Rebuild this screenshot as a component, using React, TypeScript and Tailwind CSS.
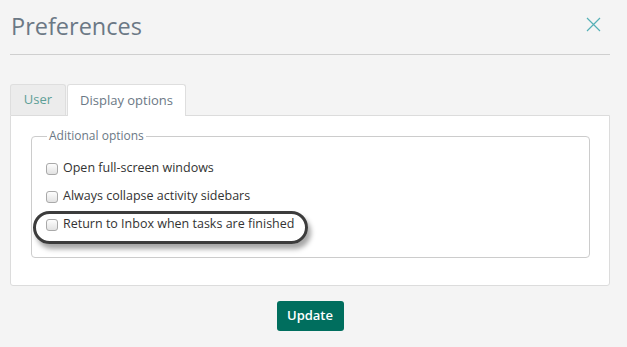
import React from "react";

const rows = [
  "Open full-screen windows",
  "Always collapse activity sidebars",
  "Return to Inbox when tasks are finished",
];

function Box() {
  return (
    <span className="inline-block w-[12px] h-[12px] rounded-[3px] border border-[#a9a9a9] bg-gradient-to-b from-[#fdfdfd] to-[#e2e2e2] shrink-0" />
  );
}

export default function App() {
  return (
    <div className="w-[627px] h-[347px] bg-[#f4f4f4] font-['Open_Sans',sans-serif] pl-[10px] pr-[17px] overflow-hidden">
      <div className="flex items-start justify-between h-[55px] border-b border-[#cfcfcf]">
        <h1 className="text-[23.5px] leading-none text-[#6b7885] mt-[15px] ml-[1px]">Preferences</h1>
        <svg className="mt-[17px] mr-[9px]" width="15" height="15" viewBox="0 0 15 15">
          <path d="M1 1 L14 14 M14 1 L1 14" stroke="#55b0b6" strokeWidth="1.2" fill="none" />
        </svg>
      </div>

      <div className="mt-[29px] flex h-[31px] items-end">
        <div className="w-[56px] h-[31px] bg-[#ececec] border border-[#dedede] border-b-0 rounded-t-[3px] flex items-center justify-center text-[13px] text-[#5d9f97]">
          User
        </div>
        <div className="ml-[1px] w-[119px] h-[32px] -mb-px relative z-10 bg-white border border-[#dedede] border-b-0 rounded-t-[3px] flex items-center justify-center text-[13px] text-[#6b7885]">
          Display options
        </div>
      </div>

      <div className="w-[600px] h-[171px] bg-white border border-[#dcdcdc] rounded-b-[3px] pt-[11px] pl-[20px]">
        <fieldset className="relative w-[559px] h-[131px] border border-[#cccccc] rounded-[4px] px-[14px] pt-[10px]">
          <legend className="text-[12px] text-[#6b7885] px-[2px] ml-[1px]">Aditional options</legend>
          <div className="flex flex-col gap-[13px] mt-[6px]">
            {rows.map((r) => (
              <label key={r} className="flex items-center gap-[5px] h-[15px] text-[12.5px] text-[#333333]">
                <Box />
                <span>{r}</span>
              </label>
            ))}
          </div>
          <div className="absolute left-[1px] top-[66px] w-[275px] h-[33px] rounded-full border-[3px] border-[#3c3c3c] shadow-[3px_5px_5px_rgba(0,0,0,0.35)]" />
        </fieldset>
      </div>

      <div className="flex justify-center mt-[15px]">
        <button className="w-[67px] h-[30px] rounded-[3px] bg-[#006e5e] text-white text-[13px] font-semibold">
          Update
        </button>
      </div>
    </div>
  );
}
